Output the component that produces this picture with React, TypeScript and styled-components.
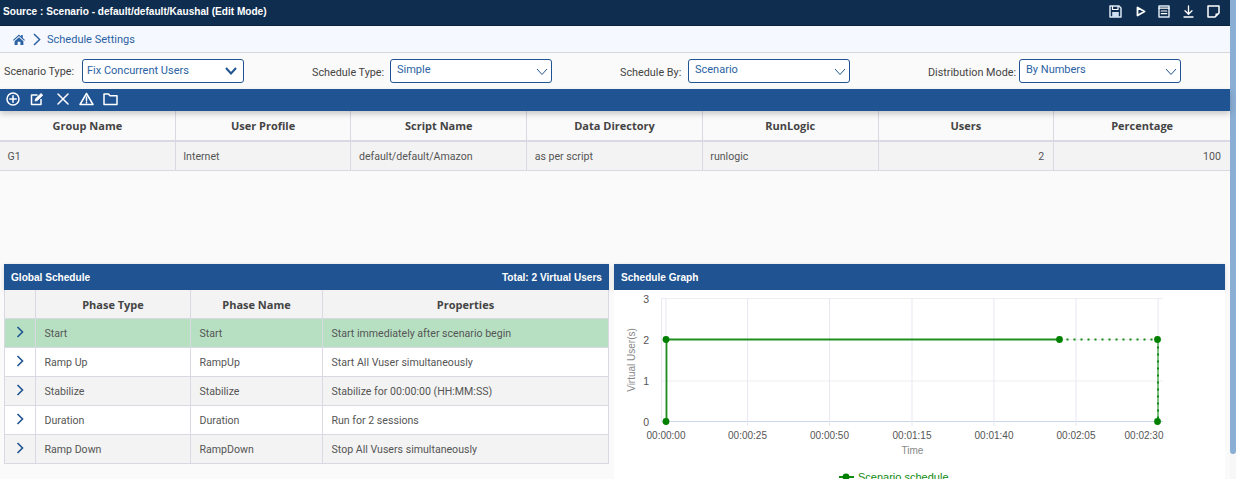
import React from 'react';
import styled, { createGlobalStyle } from 'styled-components';

const Global = createGlobalStyle`
  html, body { margin: 0; padding: 0; height: 479px; overflow: hidden; background: #fafafa; }
  body { font-family: Roboto, "Liberation Sans", sans-serif; font-size: 11px; color: #444; }
  #root { height: 479px; }
  * { box-sizing: border-box; }
`;

const Page = styled.div`
  display: flex;
  width: 1236px;
  height: 479px;
  overflow: hidden;
`;
const Main = styled.div`
  width: 1230px;
`;
const ScrollTrack = styled.div`
  width: 6px;
  background: #f7f7f7;
`;
const ScrollThumb = styled.div`
  height: 454px;
  background: #8aaed4;
  border-radius: 0 0 3px 3px;
`;
const TitleBar = styled.div`
  height: 26px;
  background: #0f2d4f;
  border-bottom: 1px solid #0b2340;
  display: flex;
  align-items: center;
  justify-content: space-between;
  padding: 0 10px 2px 3px;
  color: #fff;
  font-family: "Liberation Sans", Arial, sans-serif;
  font-weight: 700;
  font-size: 10.1px;
`;
const TitleIcons = styled.div`
  display: flex;
  align-items: center;
`;
const TitleIcon = styled.svg<{ $gap?: number }>`
  margin-left: ${p => p.$gap ?? 0}px;
`;
const Crumbs = styled.div`
  height: 27px;
  background: #f6f8ff;
  border-bottom: 1px solid #d5d7dd;
  display: flex;
  align-items: center;
  padding-left: 13px;
  color: #2a62a3;
  font-size: 11px;
  gap: 7px;
`;
const CrumbText = styled.span`
  margin-left: -1px;
`;
const Filters = styled.div`
  height: 36px;
  display: grid;
  grid-template-columns: 308px 308px 308px 1fr;
  padding: 6px 0 0 4px;
  align-items: start;
`;
const Filter = styled.div`
  display: flex;
  align-items: center;
  gap: 4px;
  color: #444;
  font-size: 10.8px;
`;
const Label = styled.span<{ $w: number; $drop?: number }>`
  position: relative;
  top: ${p => p.$drop ?? 1}px;
  width: ${p => p.$w}px;
  white-space: nowrap;
`;
const Select = styled.div<{ $bold?: boolean }>`
  width: 162px;
  height: 24px;
  background: #fff;
  border: 1px solid #1f5391;
  border-radius: 3px;
  display: flex;
  justify-content: space-between;
  padding: ${p => (p.$bold ? '4px 6px 0 4px' : '3px 3px 0 6px')};
  color: #2a62a3;
  font-size: 11px;
  line-height: 14px;
`;
const Chevron = styled.svg<{ $bold?: boolean }>`
  margin-top: ${p => (p.$bold ? 3 : 5)}px;
`;
const Toolbar = styled.div`
  height: 22px;
  background: #1f5391;
  display: flex;
  align-items: center;
  padding: 0 0 2px 6px;
  box-shadow: 0 3px 6px rgba(0, 0, 0, 0.2);
  position: relative;
`;
const ToolIcon = styled.svg<{ $gap?: number }>`
  margin-left: ${p => p.$gap ?? 0}px;
`;
const GroupTable = styled.div`
  height: 153px;
`;
const GroupRow = styled.div<{ $head?: boolean }>`
  display: grid;
  grid-template-columns: repeat(7, 1fr);
  width: 1230px;
  height: ${p => (p.$head ? 31 : 29)}px;
  background: ${p => (p.$head ? '#fafafa' : '#f3f3f3')};
  border-bottom: ${p => (p.$head ? '2px' : '1px')} solid #d8d9e3;
`;
const HeadCell = styled.div`
  display: flex;
  align-items: center;
  justify-content: center;
  border-right: 1px solid #d8d9e3;
  font-family: "Open Sans", "Noto Sans", sans-serif;
  font-weight: 700;
  font-size: 11px;
  color: #444;
  &:last-child { border-right: none; }
`;
const Cell = styled.div<{ $right?: boolean }>`
  display: flex;
  align-items: center;
  justify-content: ${p => (p.$right ? 'flex-end' : 'flex-start')};
  padding: 1px 9px 0 7.5px;
  border-right: 1px solid #d8d9e3;
  font-size: 10.6px;
  color: #555;
  &:last-child { border-right: none; }
`;
const Panels = styled.div`
  display: flex;
  padding-left: 4px;
  gap: 5px;
`;
const Panel = styled.section<{ $w: number }>`
  width: ${p => p.$w}px;
`;
const PanelHead = styled.div`
  height: 26px;
  background: #1f5391;
  color: #fff;
  font-family: "Liberation Sans", Arial, sans-serif;
  font-weight: 700;
  font-size: 10.1px;
  display: flex;
  align-items: center;
  justify-content: space-between;
  padding: 0 7px;
  box-shadow: 0 1px 4px rgba(0, 0, 0, 0.15);
`;
const PhaseTable = styled.div`
  border-left: 1px solid #d8d9e3;
`;
const PhaseRow = styled.div<{ $bg: string }>`
  display: grid;
  grid-template-columns: 31px 155px 132px 1fr;
  height: 29px;
  background: ${p => p.$bg};
  border-bottom: 1px solid #d8d9e3;
`;
const PhaseHead = styled.div`
  display: flex;
  align-items: center;
  justify-content: center;
  border-right: 1px solid #d8d9e3;
  font-family: "Open Sans", "Noto Sans", sans-serif;
  font-weight: 700;
  font-size: 11px;
  color: #444;
`;
const PhaseCell = styled.div`
  display: flex;
  align-items: center;
  padding-left: 8.5px;
  border-right: 1px solid #d8d9e3;
  font-size: 10.6px;
  color: #555;
`;
const ExpandCell = styled.div`
  display: flex;
  align-items: center;
  justify-content: center;
  padding: 0 0 3px 0;
  border-right: 1px solid #d8d9e3;
`;
const GraphBody = styled.div`
  height: 190px;
  background: #fff;
  overflow: hidden;
`;
const IconHost = styled.span`
  display: inline-flex;
`;

const W = '#fff';
const ic = { fill: 'none', stroke: W, strokeWidth: 1.5, strokeLinejoin: 'round' as const, strokeLinecap: 'round' as const };

const ChevronDown = ({ heavy }: { heavy?: boolean }) => (
  <Chevron $bold={heavy} width="12" height="8" viewBox="0 0 12 8">
    <path d="M1 1 L6 6.5 L11 1" fill="none" stroke="#1f5391" strokeWidth={heavy ? 2 : 1} />
  </Chevron>
);

const Expand = () => (
  <svg width="8" height="12" viewBox="0 0 8 12">
    <path d="M1.5 1 L6.5 6 L1.5 11" fill="none" stroke="#1f5391" strokeWidth="1.6" />
  </svg>
);

const groupHeads = ['Group Name', 'User Profile', 'Script Name', 'Data Directory', 'RunLogic', 'Users', 'Percentage'];
const phases: [string, string, string][] = [
  ['Start', 'Start', 'Start immediately after scenario begin'],
  ['Ramp Up', 'RampUp', 'Start All Vuser simultaneously'],
  ['Stabilize', 'Stabilize', 'Stabilize for 00:00:00 (HH:MM:SS)'],
  ['Duration', 'Duration', 'Run for 2 sessions'],
  ['Ramp Down', 'RampDown', 'Stop All Vusers simultaneously'],
];
const rowBg = ['#b7e0c3', '#ffffff', '#f3f3f3', '#ffffff', '#f3f3f3'];

const xTicks: [number, string][] = [
  [52, '00:00:00'], [133.5, '00:00:25'], [215.5, '00:00:50'], [298, '00:01:15'],
  [380, '00:01:40'], [462, '00:02:05'], [544, '00:02:30'],
];
const yTicks: [number, string][] = [[8.5, '3'], [49.5, '2'], [91, '1'], [131.5, '0']];

const Graph = () => (
  <svg width="611" height="190" viewBox="0 0 611 190" fontFamily='"Liberation Sans", Arial, sans-serif'>
    {yTicks.map(([y]) => (
      <line key={y} x1="47" x2="549" y1={y} y2={y} stroke={y === 131.5 ? '#ccd6eb' : '#eeeeee'} strokeWidth="1" />
    ))}
    <line x1="47.5" x2="47.5" y1="8" y2="131.5" stroke="#e6e9f2" />
    {xTicks.map(([x]) => (
      <line key={x} x1={x} x2={x} y1="8" y2="136" stroke="#e6e9f2" />
    ))}
    {yTicks.map(([y, t]) => (
      <text key={t} x="35" y={y + 4} textAnchor="end" fontSize="10.5" fill="#555">{t}</text>
    ))}
    {xTicks.map(([x, t]) => (
      <text key={t} x={x === 544 ? 530 : x} y="149" textAnchor="middle" fontSize="10" fill="#555">{t}</text>
    ))}
    <text x="298.5" y="164" textAnchor="middle" fontSize="10" fill="#888">Time</text>
    <text transform="translate(21 70) rotate(-90)" textAnchor="middle" fontSize="10" fill="#888">Virtual User(s)</text>
    <path d="M52.5 131.5 L52.5 49.5 L445.5 49.5" fill="none" stroke="#1f8f1f" strokeWidth="1.8" />
    <path d="M445.5 49.5 L543.5 49.5" fill="none" stroke="#118a11" strokeWidth="2" strokeDasharray="2 5" />
    <path d="M544 49.5 L544 131.5" fill="none" stroke="#118a11" strokeWidth="1" />
    <path d="M544 49.5 L544 131.5" fill="none" stroke="#118a11" strokeWidth="2" strokeDasharray="2 5" />
    {[[52, 131.5], [52, 49.5], [445.5, 49.5], [543.5, 49.5], [543.5, 131.5]].map(([x, y]) => (
      <circle key={`${x}-${y}`} cx={x} cy={y} r="3.4" fill="#008000" />
    ))}
    <line x1="225" x2="240" y1="187" y2="187" stroke="#118a11" strokeWidth="2" />
    <circle cx="232" cy="187" r="3.4" fill="#008000" />
    <text x="244" y="191" fontSize="11" fill="#118a11">Scenario schedule</text>
  </svg>
);

export default function App() {
  return (
    <Page>
      <Global />
      <Main>
        <TitleBar>
          <span>Source : Scenario - default/default/Kaushal (Edit Mode)</span>
          <TitleIcons>
            <TitleIcon width="13" height="13" viewBox="0 0 13 13">
              <path d="M1 1 H10 L12 3 V12 H1 Z" {...ic} stroke="#dbe7f5" />
              <path d="M3.5 1.5 V4.5 H9 V1.5" {...ic} strokeWidth={1.2} />
              <rect x="3.2" y="7" width="6.6" height="5" fill="#cfe0f2" />
            </TitleIcon>
            <TitleIcon $gap={14} width="10" height="13" viewBox="0 0 10 13">
              <path d="M1.5 2.5 L8.5 6.5 L1.5 10.5 Z" {...ic} strokeWidth={1.8} />
            </TitleIcon>
            <TitleIcon $gap={12} width="12" height="13" viewBox="0 0 12 13">
              <rect x="1" y="1" width="10" height="11" {...ic} stroke="#dbe7f5" />
              <path d="M1 3.2 H11 M3.2 6 H8.8 M3.2 8.6 H8.8" {...ic} strokeWidth={1.2} />
            </TitleIcon>
            <TitleIcon $gap={13} width="11" height="13" viewBox="0 0 11 13">
              <path d="M5.5 1 V9 M2 5.8 L5.5 9.3 L9 5.8 M1 12 H10" {...ic} strokeWidth={1.3} />
            </TitleIcon>
            <TitleIcon $gap={13} width="13" height="13" viewBox="0 0 13 13">
              <path d="M1 1 H12 V8 L8 12 H1 Z" {...ic} />
              <path d="M12 8.5 H8.5 V12 Z" fill="#fff" />
            </TitleIcon>
          </TitleIcons>
        </TitleBar>
        <Crumbs>
          <IconHost>
            <svg width="12" height="11" viewBox="0 0 12 11">
              <path d="M6 0.4 L8.2 2.4 V1 H9.8 V3.9 L12 5.9 L11.2 6.8 L6 2 L0.8 6.8 L0 5.9 Z M6 3.2 L10.4 7.2 V11 H7.4 V7.8 H4.6 V11 H1.6 V7.2 Z" fill="#2a62a3" />
            </svg>
          </IconHost>
          <IconHost>
            <svg width="9" height="13" viewBox="0 0 9 13">
              <path d="M2 1 L7.6 6.5 L2 12" fill="none" stroke="#2a62a3" strokeWidth="1.5" />
            </svg>
          </IconHost>
          <CrumbText>Schedule Settings</CrumbText>
        </Crumbs>
        <Filters>
          <Filter>
            <Label $w={74} $drop={0}>Scenario Type:</Label>
            <Select $bold>Fix Concurrent Users<ChevronDown heavy /></Select>
          </Filter>
          <Filter>
            <Label $w={74}>Schedule Type:</Label>
            <Select>Simple<ChevronDown /></Select>
          </Filter>
          <Filter>
            <Label $w={64}>Schedule By:</Label>
            <Select>Scenario<ChevronDown /></Select>
          </Filter>
          <Filter>
            <Label $w={87}>Distribution Mode:</Label>
            <Select>By Numbers<ChevronDown /></Select>
          </Filter>
        </Filters>
        <Toolbar>
          <ToolIcon width="14" height="14" viewBox="0 0 14 14">
            <circle cx="7" cy="7" r="6" {...ic} />
            <path d="M7 3.8 V10.2 M3.8 7 H10.2" {...ic} />
          </ToolIcon>
          <ToolIcon $gap={10} width="14" height="14" viewBox="0 0 14 14">
            <path d="M11 7.5 V12.5 H1.5 V3 H7" {...ic} />
            <path d="M5 9 L5.5 6.8 L11 1.5 L12.8 3.2 L7.2 8.6 Z" fill="#fff" stroke="#fff" strokeWidth="0.8" />
          </ToolIcon>
          <ToolIcon $gap={12} width="14" height="14" viewBox="0 0 14 14">
            <path d="M2 2 L12 12 M12 2 L2 12" {...ic} />
          </ToolIcon>
          <ToolIcon $gap={9} width="15" height="14" viewBox="0 0 15 14">
            <path d="M7.5 1.5 L14 12.5 H1 Z" {...ic} />
            <path d="M7.5 5 V8.8 M7.5 10.2 V11" {...ic} />
          </ToolIcon>
          <ToolIcon $gap={9} width="15" height="14" viewBox="0 0 15 14">
            <path d="M1 2 H5.5 L7 3.8 H14 V12.5 H1 Z" {...ic} />
          </ToolIcon>
        </Toolbar>
        <GroupTable>
          <GroupRow $head>
            {groupHeads.map(h => <HeadCell key={h}>{h}</HeadCell>)}
          </GroupRow>
          <GroupRow>
            <Cell>G1</Cell>
            <Cell>Internet</Cell>
            <Cell>default/default/Amazon</Cell>
            <Cell>as per script</Cell>
            <Cell>runlogic</Cell>
            <Cell $right>2</Cell>
            <Cell $right>100</Cell>
          </GroupRow>
        </GroupTable>
        <Panels>
          <Panel $w={605}>
            <PanelHead>
              <span>Global Schedule</span>
              <span>Total: 2 Virtual Users</span>
            </PanelHead>
            <PhaseTable>
              <PhaseRow $bg="#f3f3f3">
                <PhaseHead />
                <PhaseHead>Phase Type</PhaseHead>
                <PhaseHead>Phase Name</PhaseHead>
                <PhaseHead>Properties</PhaseHead>
              </PhaseRow>
              {phases.map((p, i) => (
                <PhaseRow key={p[0]} $bg={rowBg[i]}>
                  <ExpandCell><Expand /></ExpandCell>
                  <PhaseCell>{p[0]}</PhaseCell>
                  <PhaseCell>{p[1]}</PhaseCell>
                  <PhaseCell>{p[2]}</PhaseCell>
                </PhaseRow>
              ))}
            </PhaseTable>
          </Panel>
          <Panel $w={611}>
            <PanelHead>
              <span>Schedule Graph</span>
            </PanelHead>
            <GraphBody>
              <Graph />
            </GraphBody>
          </Panel>
        </Panels>
      </Main>
      <ScrollTrack>
        <ScrollThumb />
      </ScrollTrack>
    </Page>
  );
}
